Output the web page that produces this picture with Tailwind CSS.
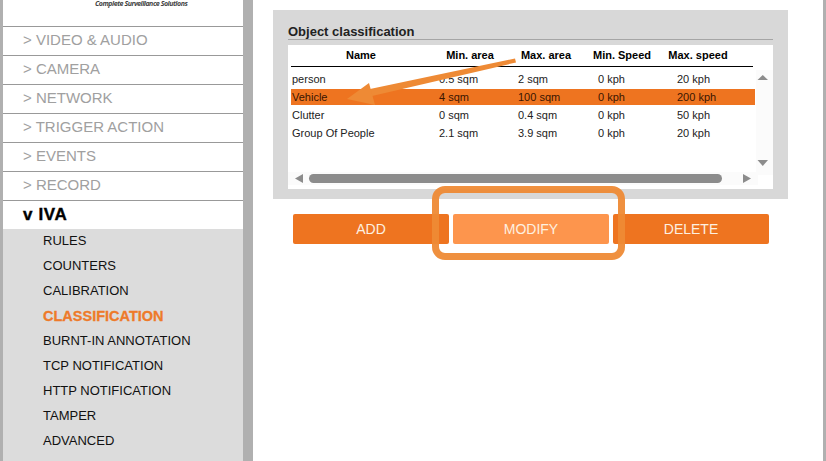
<!DOCTYPE html>
<html lang="en">
  <head>
    <meta charset="UTF-8" />
    <title>IVA Classification</title>
    <script src="https://cdn.jsdelivr.net/npm/@tailwindcss/browser@4"></script>
  </head>
  <body class="relative w-[826px] h-[461px] overflow-hidden bg-white font-['Liberation_Sans',Arial,sans-serif]">
    <div class="flex h-[461px]">
      <!-- Sidebar -->
      <aside class="w-[253px] h-full shrink-0 bg-[#b0b0b0] pl-[3px] pr-[10px] flex flex-col">
        <div class="h-[27px] bg-white border-b border-[#999] pl-[92px] text-[7px] leading-[7px] tracking-[-0.45px] italic font-bold text-[#444] font-['Open_Sans',sans-serif]">Complete Surveillance Solutions</div>
        <nav class="bg-white text-[15px] text-[#a0a0a0]">
          <div class="h-[29px] pl-[20px] pb-[1px] flex items-center border-b border-[#999]">&gt; VIDEO &amp; AUDIO</div>
          <div class="h-[29px] pl-[20px] pb-[1px] flex items-center border-b border-[#999]">&gt; CAMERA</div>
          <div class="h-[29px] pl-[20px] pb-[1px] flex items-center border-b border-[#999]">&gt; NETWORK</div>
          <div class="h-[29px] pl-[20px] pb-[1px] flex items-center border-b border-[#999]">&gt; TRIGGER ACTION</div>
          <div class="h-[29px] pl-[20px] pb-[1px] flex items-center border-b border-[#999]">&gt; EVENTS</div>
          <div class="h-[29px] pl-[20px] pb-[1px] flex items-center border-b border-[#999]">&gt; RECORD</div>
          <div class="h-[28px] pl-[20px] flex items-center text-[17px] font-bold text-black [-webkit-text-stroke:0.4px_black] tracking-[0.6px]">v IVA</div>
        </nav>
        <ul class="flex-1 bg-[#dcdcdc] pl-[40px] text-[13px] text-[#111] list-none">
          <li class="h-[25px] leading-[24px]">RULES</li>
          <li class="h-[25px] leading-[24px]">COUNTERS</li>
          <li class="h-[25px] leading-[24px]">CALIBRATION</li>
          <li class="h-[25px] leading-[24px] text-[14.5px] font-bold text-[#ee7a2a] [-webkit-text-stroke:0.3px_#ee7a2a]">CLASSIFICATION</li>
          <li class="h-[25px] leading-[24px]">BURNT-IN ANNOTATION</li>
          <li class="h-[25px] leading-[24px]">TCP NOTIFICATION</li>
          <li class="h-[25px] leading-[24px]">HTTP NOTIFICATION</li>
          <li class="h-[25px] leading-[24px]">TAMPER</li>
          <li class="h-[25px] leading-[24px]">ADVANCED</li>
        </ul>
      </aside>

      <!-- Main -->
      <main class="flex-1 pl-[20px] pt-[10px]">
        <section class="w-[515px] h-[189px] bg-[#d8d8d8] px-[15px] pt-[14px]">
          <h2 class="h-[15px] leading-[15px] text-[13px] font-bold text-[#222] border-b border-[#a5a5a5] box-content">Object classification</h2>
          <div class="relative h-[144px] mt-[5px] bg-white pl-[3px] text-[11px] text-[#222]">
            <div class="grid grid-cols-[140px_78px_74px_78px_74px] w-[462px] h-[22px] items-center text-center font-bold text-black border-b border-black">
              <div>Name</div><div>Min. area</div><div>Max. area</div><div>Min. Speed</div><div>Max. speed</div>
            </div>
            <div class="grid grid-cols-[140px_78px_74px_78px_74px] w-[464px] h-[18px] items-center mt-[3px]">
              <div class="pl-[1px]">person</div><div class="pl-[8px]">0.5 sqm</div><div class="pl-[9px]">2 sqm</div><div class="pl-[15px]">0 kph</div><div class="pl-[16px]">20 kph</div>
            </div>
            <div class="grid grid-cols-[140px_78px_74px_78px_74px] w-[464px] h-[16px] items-center my-px bg-[#ee7420] text-[#3a1500]">
              <div class="pl-[1px]">Vehicle</div><div class="pl-[8px]">4 sqm</div><div class="pl-[9px]">100 sqm</div><div class="pl-[15px]">0 kph</div><div class="pl-[16px]">200 kph</div>
            </div>
            <div class="grid grid-cols-[140px_78px_74px_78px_74px] w-[464px] h-[18px] items-center">
              <div class="pl-[1px]">Clutter</div><div class="pl-[8px]">0 sqm</div><div class="pl-[9px]">0.4 sqm</div><div class="pl-[15px]">0 kph</div><div class="pl-[16px]">50 kph</div>
            </div>
            <div class="grid grid-cols-[140px_78px_74px_78px_74px] w-[464px] h-[18px] items-center">
              <div class="pl-[1px]">Group Of People</div><div class="pl-[8px]">2.1 sqm</div><div class="pl-[9px]">3.9 sqm</div><div class="pl-[15px]">0 kph</div><div class="pl-[16px]">20 kph</div>
            </div>
            <!-- scrollbars -->
            <svg class="absolute left-0 top-0" width="485" height="144" viewBox="0 0 485 144">
              <rect x="0" y="127" width="470" height="13" fill="#fbfbfb" />
              <rect x="468" y="25" width="17" height="105" fill="#fbfbfb" />
              <path d="M469.500 35 L480 35 L474.750 30 Z" fill="#8c8c8c" />
              <path d="M469.500 115 L480 115 L474.750 121 Z" fill="#8c8c8c" />
              <path d="M15 129 L15 138 L7 133.500 Z" fill="#8c8c8c" />
              <path d="M455 129 L455 138 L463 133.500 Z" fill="#8c8c8c" />
              <rect x="21" y="129" width="413" height="9" rx="4.500" fill="#8c8c8c" />
            </svg>
          </div>
        </section>
        <div class="flex gap-[4px] ml-[20px] mt-[15px] text-[14px] text-[#fdf0e0]">
          <button class="w-[156px] h-[30px] rounded-[2px] bg-[#ee7420]">ADD</button>
          <button class="w-[156px] h-[30px] rounded-[2px] bg-[#fd954d]">MODIFY</button>
          <button class="w-[156px] h-[30px] rounded-[2px] bg-[#ee7420]">DELETE</button>
        </div>
      </main>
      <div class="w-[3px] h-full shrink-0 bg-[#b0b0b0]"></div>
    </div>

    <!-- Annotations on top of the screenshot -->
    <div class="absolute left-[432px] top-[186px] w-[193px] h-[74px] rounded-[13px] border-[7px] border-[#ee8a35]/95"></div>
    <svg class="absolute left-[340px] top-[50px]" width="190" height="60" viewBox="0 0 190 60">
      <path d="M175 8.500 L30 39 L32 46 L176 12.500 Z" fill="#ee8a35" />
      <path d="M7 49 L29 33 L35 55 Z" fill="#ee8a35" />
    </svg>
  </body>
</html>
